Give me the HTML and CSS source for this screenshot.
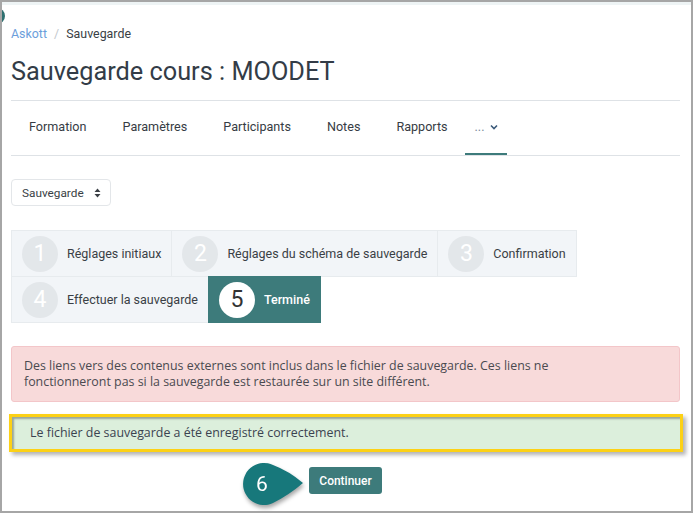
FILE: index.html
```html
<!DOCTYPE html>
<html lang="fr">
<head>
    <meta charset="UTF-8">
    <meta name="viewport" content="width=device-width, initial-scale=1.0">
    <title>Sauvegarde cours : MOODET</title>
    <link rel="stylesheet" href="styles.css">
</head>
<body>
    <div class="frame">
        <div class="top-strip"></div>
        <div class="edge-dot"></div>
        <div class="page">
            <div class="header">
                <nav class="breadcrumb">
                    <a href="#">Askott</a>
                    <span class="sep">/</span>
                    <span>Sauvegarde</span>
                </nav>
                <h1 class="title">Sauvegarde cours : MOODET</h1>
            </div>

            <ul class="tabs">
                <li>Formation</li>
                <li>Paramètres</li>
                <li>Participants</li>
                <li>Notes</li>
                <li>Rapports</li>
                <li class="more active">...
                    <svg class="chev" width="8" height="6" viewBox="0 0 8 6"><path d="M1 1.5 L4 4.5 L7 1.5" fill="none" stroke="#3b5a7a" stroke-width="1.6"/></svg>
                </li>
            </ul>

            <div class="select">
                <span>Sauvegarde</span>
                <svg width="7" height="10" viewBox="0 0 7 10"><path d="M3.5 0.5 L6.5 4 H0.5 Z M3.5 9.5 L6.5 6 H0.5 Z" fill="#3a3f45"/></svg>
            </div>

            <div class="steps">
                <div class="step"><span class="num">1</span>Réglages initiaux</div>
                <div class="step"><span class="num">2</span>Réglages du schéma de sauvegarde</div>
                <div class="step"><span class="num">3</span>Confirmation</div>
                <div class="step"><span class="num">4</span>Effectuer la sauvegarde</div>
                <div class="step current"><span class="num">5</span>Terminé</div>
            </div>

            <div class="alert alert-danger">
                Des liens vers des contenus externes sont inclus dans le fichier de sauvegarde. Ces liens ne<br>
                fonctionneront pas si la sauvegarde est restaurée sur un site différent.
            </div>

            <div class="alert alert-success">
                Le fichier de sauvegarde a été enregistré correctement.
            </div>

            <div class="actions">
                <button class="btn">Continuer</button>
            </div>
        </div>

        <div class="callout">
            <svg width="66" height="46" viewBox="0 0 66 46">
                <path d="M33 3 Q49 9 63 21 Q49 33 33 41 A21 21 0 1 1 33 3 Z" fill="#17787b"/>
            </svg>
            <span>6</span>
        </div>
    </div>
</body>
</html>
```

FILE: styles.css
```css
body {
    margin: 0;
    background: #fff;
    font-family: Roboto, "Liberation Sans", sans-serif;
    color: #343a40;
}
.frame {
    position: relative;
    width: 693px;
    height: 513px;
    box-sizing: border-box;
    border: 2px solid #a6a6a6;
    overflow: hidden;
    background: #fff;
}
.top-strip {
    height: 3px;
    background: #eef4f5;
}
.edge-dot {
    position: absolute;
    left: -13px;
    top: 6px;
    width: 16px;
    height: 16px;
    border-radius: 50%;
    background: #2e6f70;
}
.page {
    padding: 0 11px 0 9px;
}
.header {
    border-bottom: 1px solid #dee2e6;
    padding-bottom: 13px;
}
.breadcrumb {
    margin-top: 20px;
    font-size: 12.4px;
    line-height: 18px;
    color: #3a3f45;
}
.breadcrumb a {
    color: #6b9edb;
    text-decoration: none;
}
.breadcrumb .sep {
    color: #c3c8cd;
    margin: 0 4px;
}
.title {
    margin: 14px 0 0;
    font-size: 25.3px;
    line-height: 30px;
    font-weight: 400;
    color: #333c47;
}
.tabs {
    display: flex;
    list-style: none;
    margin: 0;
    padding: 0;
    border-bottom: 1px solid #dee2e6;
}
.tabs li {
    padding: 16px 18px 18px;
    font-size: 12.6px;
    line-height: 20px;
    color: #363c44;
}
.tabs li:nth-child(5) {
    padding-right: 17px;
}
.tabs .more {
    padding: 16px 9px 18px 10px;
    color: #7a8a9a;
}
.tabs .chev {
    margin-left: 2px;
    vertical-align: 1px;
}
.tabs .active {
    box-shadow: inset 0 -2px 0 #3d7b7b;
}
.select {
    display: flex;
    align-items: center;
    gap: 10px;
    width: fit-content;
    margin-top: 23px;
    height: 27px;
    box-sizing: border-box;
    padding: 0 9px 0 10px;
    border: 1px solid #e3e6e9;
    border-radius: 4px;
    font-size: 11.8px;
    color: #3a3f45;
}
.steps {
    display: flex;
    flex-wrap: wrap;
    max-width: 600px;
    margin-top: 24px;
}
.step {
    display: flex;
    align-items: center;
    gap: 9px;
    height: 47px;
    box-sizing: border-box;
    padding: 0 10px;
    margin: 0 -1px -1px 0;
    background: #f2f5f8;
    border: 1px solid #e7ebee;
    font-size: 12.5px;
    color: #3a3f45;
}
.num {
    display: flex;
    align-items: center;
    justify-content: center;
    width: 36px;
    height: 36px;
    border-radius: 50%;
    background: #e3e7ea;
    color: #fff;
    font-size: 23px;
}
.step.current {
    background: #3d7b7b;
    border-color: #3d7b7b;
    color: #fff;
    font-weight: 500;
}
.step.current .num {
    background: #fff;
    color: #333;
    font-weight: 400;
}
.alert {
    font-family: "Open Sans", "Liberation Sans", sans-serif;
    font-size: 12.4px;
    line-height: 16px;
}
.alert-danger {
    margin-top: 24px;
    padding: 11px 12px 11px;
    background: #f8dada;
    border: 1px solid #f3c6c9;
    border-radius: 3px;
    color: #4a4a50;
}
.alert-success {
    margin: 12px -3px 0 -2px;
    padding: 8px 18px;
    background: #dcefdc;
    border: 3px solid #fcd116;
    box-shadow: inset 2px 2px 2px rgba(0,0,0,0.3), 3px 3px 4px rgba(0,0,0,0.3);
    color: #3b4350;
}
.actions {
    margin-top: 15px;
    text-align: center;
}
.btn {
    height: 27px;
    padding: 0 10px;
    border: none;
    border-radius: 3px;
    background: #3d7b7b;
    color: #fff;
    font-family: Roboto, "Liberation Sans", sans-serif;
    font-size: 12px;
    font-weight: 500;
}
.callout {
    position: absolute;
    left: 238px;
    top: 460px;
    width: 66px;
    height: 46px;
    filter: drop-shadow(1px 3px 2px rgba(0,0,0,0.35));
}
.callout svg {
    display: block;
}
.callout span {
    position: absolute;
    left: 1px;
    top: 10px;
    width: 42px;
    text-align: center;
    color: #fff;
    font-size: 21px;
    line-height: 24px;
}
```
